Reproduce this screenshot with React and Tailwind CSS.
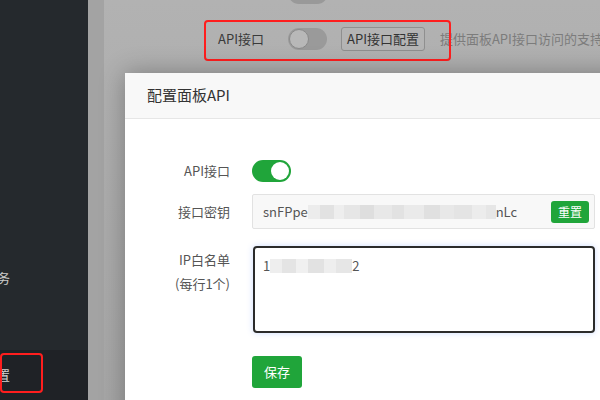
import React from 'react';

const font = { fontFamily: '"Noto Sans CJK SC", "Noto Sans", sans-serif' };

function Blur({ cells }) {
  return (
    <span className="inline-flex h-[14px] items-stretch">
      {cells.map((c, i) => (
        <span key={i} className={c[1]} style={{ width: c[0] }} />
      ))}
    </span>
  );
}

const keyCells = [
  [12, 'bg-[#ececec]'], [14, 'bg-[#e2e2e2]'], [10, 'bg-[#eeeeee]'], [16, 'bg-[#e6e6e6]'],
  [14, 'bg-[#dedede]'], [18, 'bg-[#e8e8e8]'], [12, 'bg-[#e2e2e2]'], [20, 'bg-[#eaeaea]'],
  [16, 'bg-[#e0e0e0]'], [14, 'bg-[#e8e8e8]'], [18, 'bg-[#e4e4e4]'], [14, 'bg-[#ececec]'],
  [10, 'bg-[#e6e6e6]'],
];

const ipCells = [
  [12, 'bg-[#eeeeee]'], [14, 'bg-[#e4e4e4]'], [12, 'bg-[#f0f0f0]'], [16, 'bg-[#e2e2e2]'],
  [12, 'bg-[#eeeeee]'], [16, 'bg-[#e6e6e6]'],
];

export default function App() {
  return (
    <div className="relative flex h-[400px] w-[600px] overflow-hidden bg-[#adadad]" style={font}>
      {/* sidebar */}
      <div className="flex w-[88px] shrink-0 flex-col bg-[#25292d] pt-[254px]">
        <div className="flex h-[48px] items-center whitespace-nowrap text-[13px] text-[#c9c9c9]">
          <span className="-ml-[42px]">计划任务</span>
        </div>
        <div className="flex h-[48px] items-center whitespace-nowrap text-[13px] text-[#c9c9c9]">
          <span className="-ml-[42px]">面板告</span>
        </div>
        <div className="flex h-[50px] items-center whitespace-nowrap bg-[#1f2226] text-[13px] text-[#d2d2d2]">
          <span className="-ml-[42px]">面板设置</span>
        </div>
      </div>
      <div className="absolute left-0 top-[353px] h-[40px] w-[43px] rounded-[4px] border-2 border-[#ff1e1e]" />

      {/* page behind overlay */}
      <div className="w-[16px] shrink-0 bg-[#a3a3a3]" />
      <div className="relative min-w-0 flex-1 bg-gradient-to-b from-[#b2b2b2] to-[#a6a6a6]">
        <div className="absolute left-[184px] top-[-18px] h-[22px] w-[40px] rounded-full bg-[#999999]" />
        <div className="flex items-center whitespace-nowrap pl-[114px] pt-[27px] text-[13px]">
          <span className="w-[70px] shrink-0 text-[#3a3a3a]">API接口</span>
          <span className="relative h-[22px] w-[39px] shrink-0 rounded-full bg-[#9a9a9a]">
            <span className="absolute left-[1px] top-[1px] h-[20px] w-[20px] rounded-full border border-[#8a8a8a] bg-[#b8b8b8]" />
          </span>
          <span className="ml-[14px] shrink-0 rounded-[3px] border border-[#8f8f8f] bg-[#b4b4b4] px-[5px] py-[1px] text-[#333333]">
            API接口配置
          </span>
          <span className="ml-[15px] shrink-0 text-[#7c7c7c]">提供面板API接口访问的支持</span>
        </div>
        <div className="absolute left-[100px] top-[20px] h-[41px] w-[247px] rounded-[4px] border-2 border-[#ff1e1e]" />
      </div>

      {/* modal */}
      <div className="absolute left-[125px] top-[73px] h-[360px] w-[520px] bg-white shadow-[0_0_24px_rgba(0,0,0,0.3)]">
        <div className="flex h-[46px] items-center border-b border-[#e6e6e6] bg-[#f8f8f8] pl-[22px] text-[15px] text-[#333333]">
          配置面板API
        </div>
        <div className="flex flex-col pt-[41px] text-[13px] text-[#555555]">
          <div className="flex items-center">
            <span className="w-[105px] text-right">API接口</span>
            <span className="relative ml-[22px] h-[22px] w-[39px] rounded-full bg-[#20a53a]">
              <span className="absolute right-[2px] top-[2px] h-[18px] w-[18px] rounded-full bg-white" />
            </span>
          </div>
          <div className="mt-[12px] flex items-center">
            <span className="w-[105px] text-right">接口密钥</span>
            <div className="ml-[22px] flex h-[35px] w-[343px] items-center rounded-[2px] border border-[#e2e2e2] bg-[#f8f8f8] pl-[10px] pr-[5px]">
              <span>snFPpe</span>
              <Blur cells={keyCells} />
              <span>nLc</span>
              <span className="ml-auto rounded-[3px] bg-[#20a53a] px-[7px] py-[2px] text-[12px] text-white">重置</span>
            </div>
          </div>
          <div className="mt-[17px] flex items-start">
            <div className="flex w-[105px] flex-col items-end pt-[2px] leading-[24px]">
              <span>IP白名单</span>
              <span>(每行1个)</span>
            </div>
            <div className="ml-[23px] h-[87px] w-[342px] rounded-[4px] border-2 border-[#2b2b2b] px-[8px] py-[8px] shadow-[0_0_6px_rgba(90,140,255,0.3)]">
              <div className="flex items-center">
                <span>1</span>
                <Blur cells={ipCells} />
                <span>2</span>
              </div>
            </div>
          </div>
          <div className="ml-[127px] mt-[23px]">
            <span className="inline-flex h-[32px] w-[50px] items-center justify-center rounded-[3px] bg-[#20a53a] text-[13px] text-white">
              保存
            </span>
          </div>
        </div>
      </div>
    </div>
  );
}
